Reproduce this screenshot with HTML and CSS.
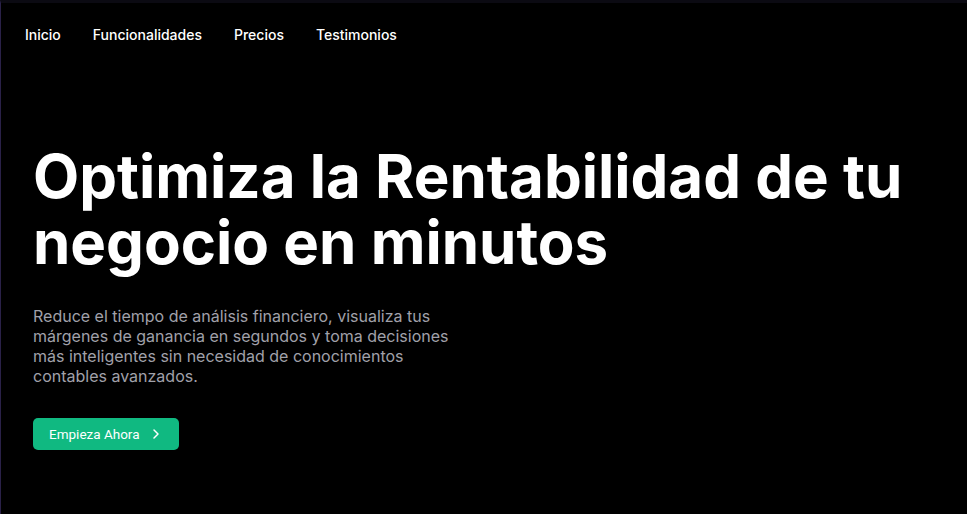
FILE: index.html
```html
<!DOCTYPE html>
<html lang="es">
<head>
<meta charset="utf-8">
<title>Rentabilidad</title>
<link rel="stylesheet" href="styles.css">
</head>
<body>
<div class="page">
  <nav class="nav">
    <a href="#" class="nav-link">Inicio</a>
    <a href="#" class="nav-link">Funcionalidades</a>
    <a href="#" class="nav-link">Precios</a>
    <a href="#" class="nav-link">Testimonios</a>
  </nav>
  <section class="hero">
    <h1 class="title">Optimiza la Rentabilidad de tu negocio en minutos</h1>
    <p class="lead">Reduce el tiempo de análisis financiero, visualiza tus márgenes de ganancia en segundos y toma decisiones más inteligentes sin necesidad de conocimientos contables avanzados.</p>
    <a href="#" class="cta">Empieza Ahora
      <svg class="cta-icon" viewBox="0 0 16 16" width="16" height="16" fill="none" stroke="currentColor" stroke-width="1.5" stroke-linecap="round" stroke-linejoin="round"><path d="M6 4l4 4-4 4"/></svg>
    </a>
  </section>
</div>
</body>
</html>
```
FILE: styles.css
```css
html, body {
  margin: 0;
  padding: 0;
  background: #000;
}
body {
  font-family: Inter, "Noto Sans", sans-serif;
  color: #fff;
  height: 514px;
  overflow: hidden;
}
.page {
  min-height: 514px;
  box-sizing: border-box;
  border-top: 3px solid #0b0a12;
  border-left: 1px solid #2a2148;
  background: #000;
}
.nav {
  display: flex;
  gap: 32px;
  padding: 23px 24px 0;
}
.nav-link {
  color: #fff;
  text-decoration: none;
  font-size: 14px;
  line-height: 17px;
  font-weight: 500;
}
.hero {
  padding: 100px 32px 0;
}
.title {
  margin: 0;
  font-size: 60px;
  line-height: 66px;
  font-weight: 700;
  letter-spacing: 0;
  max-width: 900px;
}
.lead {
  margin: 31px 0 0;
  max-width: 430px;
  font-size: 16px;
  line-height: 20px;
  color: #a1a1aa;
}
.cta {
  margin-top: 32px;
  display: inline-flex;
  align-items: center;
  gap: 8px;
  height: 32px;
  padding: 0 15px 0 16px;
  background: #10b981;
  color: #fff;
  border-radius: 5px;
  text-decoration: none;
  font-family: Roboto, "Liberation Sans", sans-serif;
  font-size: 13.5px;
  font-weight: 400;
}
.cta-icon {
  display: block;
}
```
